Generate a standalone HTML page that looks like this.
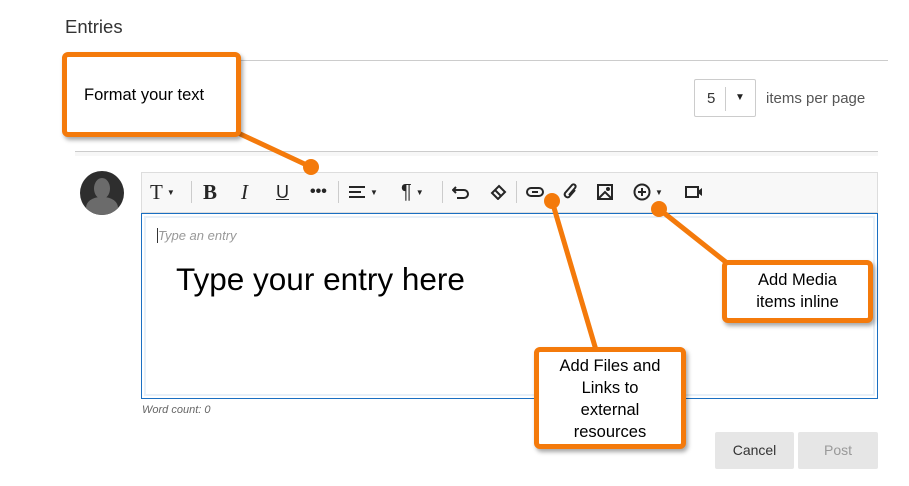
<!DOCTYPE html>
<html><head><style>
body{margin:0;width:909px;height:486px;background:#fff;position:relative;overflow:hidden;font-family:"Liberation Sans",sans-serif}
.a{position:absolute}
.co{position:absolute;background:#fff;border:5px solid #f47a0b;border-radius:6px;box-shadow:2px 3px 4px rgba(0,0,0,.35);color:#000;text-align:center;font-size:16.5px;line-height:22px;box-sizing:border-box}
.ic{position:absolute;top:172px;height:40px;display:flex;align-items:center;justify-content:center;color:#262626;font-size:19px}
.sep{position:absolute;top:181px;width:1px;height:22px;background:#ccc}
.car{font-size:8px;margin-left:4px}
</style></head><body>
<div class="a" style="left:65px;top:16px;font-size:18.5px;color:#333">Entries</div>
<div class="a" style="left:62px;top:60px;width:826px;height:1px;background:#ccc"></div>
<div class="a" style="left:694px;top:79px;width:62px;height:38px;border:1px solid #ccc;border-radius:2px;box-sizing:border-box"></div>
<div class="a" style="left:707px;top:90px;font-size:15px;color:#333">5</div>
<div class="a" style="left:725px;top:87px;width:1px;height:24px;background:#ccc"></div>
<div class="a" style="left:735px;top:92px;font-size:10px;color:#222">▼</div>
<div class="a" style="left:766px;top:90px;font-size:15px;color:#555">items per page</div>
<div class="a" style="left:75px;top:151px;width:803px;height:1px;background:#ccc"></div>
<div class="a" style="left:75px;top:152px;width:803px;height:4px;background:#f7f7f7"></div>

<div class="a" style="left:80px;top:171px;width:44px;height:44px;border-radius:50%;background:#2e2e2e;overflow:hidden">
<div class="a" style="left:14px;top:7px;width:16px;height:21px;border-radius:50%;background:#6b6b6b"></div>
<div class="a" style="left:6px;top:26px;width:32px;height:24px;border-radius:45% 45% 0 0;background:#6b6b6b"></div></div>

<div class="a" style="left:141px;top:172px;width:737px;height:41px;background:#f8f8f8;border:1px solid #ddd;box-sizing:border-box"></div>
<div class="ic" style="left:150px;font-family:'Liberation Serif',serif;font-size:21px">T<span class="car">▼</span></div>
<div class="sep" style="left:191px"></div>
<div class="ic" style="left:203px;font-weight:bold;font-family:'Liberation Serif',serif;font-size:21px">B</div>
<div class="ic" style="left:241px;font-style:italic;font-family:'Liberation Serif',serif;font-size:21px">I</div>
<div class="ic" style="left:276px;text-decoration:underline;font-size:18px">U</div>
<div class="ic" style="left:310px;font-weight:bold;font-size:16px">•••</div>
<div class="sep" style="left:338px"></div>
<div class="ic" style="left:348px"><svg width="18" height="14"><path d="M1 2h16M1 7h12M1 12h16" stroke="#262626" stroke-width="2"/></svg><span class="car">▼</span></div>
<div class="ic" style="left:401px;font-size:20px">¶<span class="car">▼</span></div>
<div class="sep" style="left:442px"></div>
<div class="ic" style="left:452px"><svg width="18" height="14"><path d="M4 2L1 5l3 3M1 5h11a4 4 0 010 8H5" fill="none" stroke="#262626" stroke-width="2"/></svg></div>
<div class="ic" style="left:489px"><svg width="18" height="16"><path d="M10 2l6 6-7 7-6-6zM6 6l6 6" fill="none" stroke="#262626" stroke-width="2"/></svg></div>
<div class="sep" style="left:516px"></div>
<div class="ic" style="left:526px"><svg width="18" height="12"><rect x="1" y="2" width="16" height="8" rx="4" fill="none" stroke="#262626" stroke-width="2"/><path d="M6 6h6" stroke="#262626" stroke-width="2"/></svg></div>
<div class="ic" style="left:562px"><svg width="16" height="18"><path d="M13 7l-6 7a3 3 0 01-4-4l7-8a2 2 0 013 3l-6 7" fill="none" stroke="#262626" stroke-width="2"/></svg></div>
<div class="ic" style="left:597px"><svg width="16" height="16"><rect x="1" y="1" width="14" height="14" fill="none" stroke="#262626" stroke-width="2"/><path d="M2 14l6-6 6 6" fill="none" stroke="#262626" stroke-width="2"/><circle cx="11" cy="5" r="2" fill="#262626"/></svg></div>
<div class="ic" style="left:633px"><svg width="18" height="18"><circle cx="9" cy="9" r="7.5" fill="none" stroke="#262626" stroke-width="2"/><path d="M9 5v8M5 9h8" stroke="#262626" stroke-width="2"/></svg><span class="car">▼</span></div>
<div class="ic" style="left:685px"><svg width="18" height="14"><rect x="1" y="2" width="12" height="10" fill="none" stroke="#262626" stroke-width="2"/><path d="M13 6l4-3v8l-4-3" fill="#262626"/></svg></div>

<div class="a" style="left:141px;top:213px;width:737px;height:186px;border:1px solid #1a6fc2;box-sizing:border-box"><div style="position:absolute;inset:2px;border:2px solid #e8f0f8"></div></div>
<div class="a" style="left:157px;top:228px;width:1px;height:15px;background:#333"></div>
<div class="a" style="left:158px;top:228px;font-size:13px;font-style:italic;color:#999">Type an entry</div>
<div class="a" style="left:176px;top:261px;font-size:31.5px;color:#000">Type your entry here</div>
<div class="a" style="left:142px;top:404px;font-size:11px;font-style:italic;color:#666">Word count: 0</div>
<div class="a" style="left:715px;top:432px;width:79px;height:37px;background:#e6e6e6;border-radius:2px;text-align:center;line-height:37px;font-size:14px;color:#333">Cancel</div>
<div class="a" style="left:798px;top:432px;width:80px;height:37px;background:#e6e6e6;border-radius:2px;text-align:center;line-height:37px;font-size:14px;color:#999">Post</div>

<svg class="a" style="left:0;top:0" width="909" height="486"><g stroke="#f47a0b" stroke-width="5" stroke-linecap="round"><path d="M236 132L311 167M552 201L596 350M659 209L727 263"/></g><g fill="#f47a0b"><circle cx="311" cy="167" r="8"/><circle cx="552" cy="201" r="8"/><circle cx="659" cy="209" r="8"/></g></svg>
<div class="co" style="left:62px;top:52px;width:179px;height:85px;padding-top:27px;text-align:left;padding-left:17px">Format your text</div>
<div class="co" style="left:722px;top:260px;width:151px;height:63px;padding-top:4px">Add Media<br>items inline</div>
<div class="co" style="left:534px;top:347px;width:152px;height:102px;padding-top:3px">Add Files and<br>Links to<br>external<br>resources</div>
</body></html>
